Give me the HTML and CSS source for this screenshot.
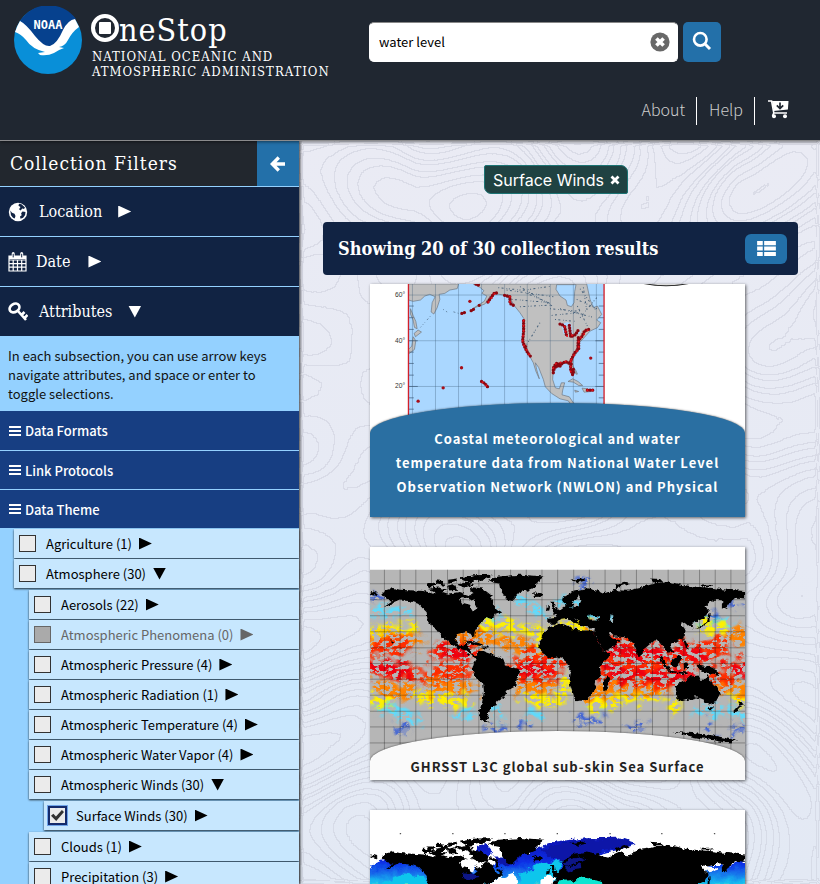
FILE: index.html
```html
<!DOCTYPE html>
<html lang="en">
<head>
<meta charset="utf-8">
<meta name="viewport" content="width=device-width, initial-scale=1">
<title>OneStop</title>
<link rel="stylesheet" href="styles.css">
</head>
<body>
<header class="site-header">
  <a class="brand" href="#">
    <svg class="brand-logo" viewBox="0 0 68 68" aria-hidden="true">
      <circle cx="34" cy="34" r="34" fill="#098fd8"/>
      <path d="M6 15A34 34 0 0 1 62 13C55 16 51 24 47 32Q42 42 37 42Q30 42 21 31Q13 20 6 15Z" fill="#06418e"/>
      <path d="M6 15Q12 18 21 30Q30 41 36 40Q43 38 49 24Q54 14 61 13L65 21Q58 26 54 34Q51 40 45 41L50 42Q44 44 40 47Q34 50 26 49L24 47L31 46Q18 43 12 34Q7 28 1 26Q3 20 6 15Z" fill="#fff"/>
      <text class="logo-text" x="34" y="23" text-anchor="middle">NOAA</text>
    </svg>
    <span class="brand-text">
      <span class="brand-name"><svg class="brand-o" viewBox="0 0 28 28" role="img" aria-label="O"><circle cx="14" cy="14" r="12" fill="none" stroke="#fff" stroke-width="4"/><rect x="8" y="8" width="12" height="12" rx="1" fill="#fff"/></svg>neStop</span>
      <span class="brand-org">NATIONAL OCEANIC AND<br>ATMOSPHERIC ADMINISTRATION</span>
    </span>
  </a>
  <div class="header-tools">
    <form class="search" role="search">
      <div class="search-box">
        <input class="search-input" type="text" value="water level" aria-label="Search text">
        <button class="search-clear" type="button" aria-label="Clear search">
          <svg viewBox="0 0 20 20"><circle cx="10" cy="10" r="9.6" fill="#686868"/><path d="M6.4 6.4l7.2 7.2M13.6 6.4l-7.2 7.2" stroke="#fff" stroke-width="3.6"/></svg>
        </button>
      </div>
      <button class="search-submit" type="submit" aria-label="Search">
        <svg viewBox="0 0 20 20" fill="none" stroke="#fff"><circle cx="8.3" cy="8.3" r="6.3" stroke-width="2.6"/><path d="M12.8 12.8l5.2 5.2" stroke-width="3"/></svg>
      </button>
    </form>
    <nav class="site-nav" aria-label="Site">
      <a href="#">About</a>
      <a href="#">Help</a>
      <a href="#" aria-label="Cart">
        <svg class="cart" viewBox="0 0 22 20"><path d="M1 2h3.600l2.200 12H20M6.500 14.500l-1 2.500" fill="none" stroke="#fff" stroke-width="1.600"/><path d="M5 2h16.500l-.6 8.600L6.700 12z" fill="#fff"/><circle cx="7" cy="17.300" r="2" fill="#fff"/><circle cx="18" cy="17.300" r="2" fill="#fff"/><path d="M13 3.500v5.500M9.800 6.300L13 9.500l3.200-3.200" fill="none" stroke="#202731" stroke-width="1.700"/></svg>
      </a>
    </nav>
  </div>
</header>

<div class="workspace">
  <aside class="filters">
    <div class="filters-head">
      <h1>Collection Filters</h1>
      <button class="collapse" type="button" aria-label="Hide filters">
        <svg viewBox="0 0 16 16" fill="none" stroke="#fff" stroke-width="3.400"><path d="M15 8H3M8.800 1.500L2.300 8l6.500 6.500"/></svg>
      </button>
    </div>
    <button class="section" type="button">
      <svg class="section-icon" viewBox="0 0 20 20"><circle cx="10" cy="10" r="9.200" fill="#fff"/><path d="M11 1.800l2.500.4 3.500 3.300-1 1.500-1.800-.6-1.500 2.100-1.700-1.200 1.500-2.300-2-1.200zM14.500 9.500l3 .5-.4 3-2 2.800-2.600 1-.5-2.300 1.700-1.200-.6-2zM2.300 8.500l1.700 2.300 2.500 1 1 2.200-.8 2.500-1.700-.7-2-2.600z" fill="#112343"/></svg>
      <span>Location</span><i class="tri"></i>
    </button>
    <button class="section section-date" type="button">
      <svg class="section-icon" viewBox="0 0 20 20"><path d="M1 4h17v15H1zM1 8h17M1 11.600h17M1 15.200h17M5.200 8v11M9.500 8v11M13.700 8v11" fill="none" stroke="#fff" stroke-width="1.200"/><path d="M1 4h17v3H1z" fill="#fff"/><path d="M5.200 1.500v4M13.700 1.500v4" stroke="#fff" stroke-width="3" stroke-linecap="round"/><path d="M5.200 1.800v3.600M13.700 1.800v3.600" stroke="#112343" stroke-width="1"/></svg>
      <span>Date</span><i class="tri"></i>
    </button>
    <button class="section" type="button" aria-expanded="true">
      <svg class="section-icon" viewBox="0 0 20 20" fill="none" stroke="#fff"><ellipse cx="6.500" cy="6" rx="5.200" ry="4" transform="rotate(-32 6.500 6)" stroke-width="2.600"/><path d="M9.500 8.500l8.500 9.500M13.500 13l3-3M16.500 16l3-3" stroke-width="2.600"/></svg>
      <span>Attributes</span><i class="tri tri-open"></i>
    </button>
    <p class="hint">In each subsection, you can use arrow keys navigate attributes, and space or enter to toggle selections.</p>
    <button class="facet" type="button"><i class="bars"></i>Data Formats</button>
    <button class="facet" type="button"><i class="bars"></i>Link Protocols</button>
    <button class="facet" type="button" aria-expanded="true"><i class="bars"></i>Data Theme</button>
    <ul class="tree">
      <li><div class="row"><label><input type="checkbox">Agriculture (1)</label><i class="tri"></i></div></li>
      <li><div class="row"><label><input type="checkbox">Atmosphere (30)</label><i class="tri tri-open"></i></div>
        <ul>
          <li><div class="row"><label><input type="checkbox">Aerosols (22)</label><i class="tri"></i></div></li>
          <li><div class="row row-off"><label><input type="checkbox" disabled>Atmospheric Phenomena (0)</label><i class="tri"></i></div></li>
          <li><div class="row"><label><input type="checkbox">Atmospheric Pressure (4)</label><i class="tri"></i></div></li>
          <li><div class="row"><label><input type="checkbox">Atmospheric Radiation (1)</label><i class="tri"></i></div></li>
          <li><div class="row"><label><input type="checkbox">Atmospheric Temperature (4)</label><i class="tri"></i></div></li>
          <li><div class="row"><label><input type="checkbox">Atmospheric Water Vapor (4)</label><i class="tri"></i></div></li>
          <li><div class="row"><label><input type="checkbox">Atmospheric Winds (30)</label><i class="tri tri-open"></i></div>
            <ul>
              <li><div class="row"><label><input type="checkbox" checked>Surface Winds (30)</label><i class="tri"></i></div></li>
            </ul>
          </li>
          <li><div class="row"><label><input type="checkbox">Clouds (1)</label><i class="tri"></i></div></li>
          <li><div class="row"><label><input type="checkbox">Precipitation (3)</label><i class="tri"></i></div></li>
        </ul>
      </li>
    </ul>
  </aside>

  <main class="results">
    <svg class="contours" aria-hidden="true">
      <filter id="topo" x="0" y="0" width="100%" height="100%" color-interpolation-filters="sRGB">
        <feTurbulence type="fractalNoise" baseFrequency=".009" numOctaves="1" seed="8"/>
        <feColorMatrix values="0 0 0 0 0  0 0 0 0 0  0 0 0 0 0  1 0 0 0 0"/>
        <feGaussianBlur stdDeviation="2"/>
        <feComponentTransfer result="steps"><feFuncA type="discrete" tableValues="0 1 0 1 0 1 0 1 0 1 0 1 0 1 0 1 0 1 0 1 0 1 0 1 0 1 0 1 0 1 0 1"/></feComponentTransfer>
        <feMorphology operator="dilate" radius="1" result="wide"/>
        <feComposite in="wide" in2="steps" operator="out"/>
        <feGaussianBlur stdDeviation=".7"/>
        <feColorMatrix values="0 0 0 0 .78  0 0 0 0 .79  0 0 0 0 .84  0 0 0 .45 0"/>
      </filter>
      <rect width="100%" height="100%" filter="url(#topo)"/>
    </svg>
    <div class="chips">
      <button class="chip" type="button">Surface Winds
        <svg viewBox="0 0 10 10"><path d="M1.500 1.500l7 7M8.500 1.500l-7 7" stroke="#fff" stroke-width="2.800"/></svg>
      </button>
    </div>
    <div class="results-bar">
      <h2>Showing 20 of 30 collection results</h2>
      <button class="view-toggle" type="button" aria-label="Show as list">
        <svg viewBox="0 0 20 16" fill="#fff"><path d="M0 0h6v4.400H0zM7.500 0H20v4.400H7.500zM0 5.800h6v4.400H0zM7.500 5.800H20v4.400H7.500zM0 11.600h6V16H0zM7.500 11.600H20V16H7.500z"/></svg>
      </button>
    </div>
    <div class="cards">
      <a class="card card-active" href="#">
        <svg class="card-art" viewBox="30 14 1125 698" preserveAspectRatio="xMidYMin slice" aria-hidden="true">
          <clipPath id="chart"><path d="M146 14h586v460H146z"/></clipPath>
          <path fill="#fff" d="M30 14h1125v698H30z"/>
          <path fill="#aad7ff" d="M146 14h586v460H146z"/>
          <g clip-path="url(#chart)">
            <g fill="#c0c0c0" stroke="#6d7680" stroke-width="2">
              <path d="M146 14H296L292 28 270 32 255 42 238 45 240 60 232 85 222 104 214 98 217 70 226 52 210 45 195 50 182 62 160 66 146 62z"/>
              <path d="M152 88l8 20 8 18 4 22-8-4-4-22-8-18zM163 162l12-10 10 6-18 14zM160 172l8 12-4 26-10 8-8 6v-14l10-10z"/>
              <path d="M340 14L360 24 372 34 366 42 381 50 373 66 341 86 375 74 391 50 403 42 434 48 452 60 464 80 480 100 492 118 488 130 488 186 496 210 510 232 520 250 528 276 538 298 530 270 526 250 536 264 550 300 556 322 575 342 600 358 625 364 635 380 650 385 628 352 606 346 608 332 614 310 604 310 598 328 586 325 578 300 580 268 590 256 604 248 626 254 632 268 638 288 644 280 638 252 640 235 656 212 658 190 672 175 690 155 712 145 722 130 710 122 725 105 712 80 700 85 690 60 680 14z"/>
              <path d="M624 306l14-8 16 8 14 12-12 0-16-10zM666 326l16 2 12 8-22 2zM644 332l12 4-10 2zM640 262l8 12 4 10-4 0z"/>
            </g>
            <path d="M590 16h58l-4 20-2 34-8 12-12-4-4-16-18-12-12-20z" fill="#aad7ff" stroke="#6d7680" stroke-width="2"/>
            <g fill="none" stroke="#48627b" stroke-width="3" stroke-dasharray="3 7 6 9 2 5">
              <path d="M415 25l75 8 80-12M455 60l120 10M480 82l95-5M440 32l140 20M570 88l90 8M575 108l80-8M540 130l-40 65M650 60l65 30M480 22l100 60M660 115l50-60M600 88l100 26M660 28l46 62M585 120l60 6M670 24l10 70M500 42l70 30M652 80l30 60"/>
              <path d="M250 90l12 8M296 102l-20-6M212 110l-30 34" stroke-width="2"/>
            </g>
            <path d="M604 134l18-6 12 6 4 30-8-2-6-24-8 6 0 22-6-4zM636 168l18-8 10-10-4 12-22 10z" fill="#aad7ff"/>
            <g stroke="#395875" stroke-opacity=".65" stroke-width="1.500" fill="none"><path d="M158 14v400M227 14v400M296 14v400M365 14v400M434 14v400M502 14v400M571 14v400M640 14v400M709 14v400M146 47h586M146 184h586M146 321h586"/><path stroke-opacity="1" stroke-width="2" d="M146 80h16M146 115h16M146 150h16M146 218h16M146 252h16M146 287h16M146 355h16M146 389h16M716 80h16M716 115h16M716 150h16M716 218h16M716 252h16M716 287h16M716 355h16M146 184h28M146 321h28M706 184h26M706 321h26"/></g>
          </g>
          <g fill="none" stroke="#8b0710" stroke-width="10" stroke-linecap="round" stroke-linejoin="round" stroke-dasharray="0 8">
            <path d="M384 68l20-28 12 2M434 48l16 4 0 20 14 8M491 124v32l-3 28 4 14 10 20 12 16M580 280v-14l8-14 16 2 12-8 18 8M582 270l6-10 20 0M632 246v24l6 16-4 4M634 240l10-20 12-12 0-28 8-6 10-20 12-4M614 142l6 28M628 138l4 34 14-6 10-16M600 134l12 4M365 306l10 6 8 10M682 332h22M358 78l6 2M306 102l10-3M334 94l10-6M348 14l14 6M640 270v12M492 195l6 8M655 175l-2 38"/>
          </g>
          <g fill="none" stroke="#e5111b" stroke-width="6" stroke-linecap="round" stroke-dasharray="0 15"><path d="M386 68l20-28M450 52v20M491 124v32l-3 28 4 14 20 34M580 266l8-14 30-6M632 246v44M634 240l22-32v-28l30-30M614 142l6 28 26-4M368 308l15 14M682 332h20"/></g>
          <g fill="#a70e18"><circle cx="330" cy="66" r="5"/><circle cx="305" cy="265" r="5"/><circle cx="250" cy="325" r="5"/><circle cx="175" cy="365" r="5"/><circle cx="692" cy="236" r="5"/></g>
          <path d="M146 14v450M732 14v450" stroke="#d3202b" stroke-width="4"/>
          <g class="axis" text-anchor="end"><text x="136" y="53">60°</text><text x="136" y="190">40°</text><text x="136" y="327">20°</text></g>
          <path d="M848 12q70 14 140 0" fill="#ddd" stroke="#222" stroke-width="3"/>
        </svg>
        <h3 class="card-title">Coastal meteorological and water temperature data from National Water Level Observation Network (NWLON) and Physical</h3>
      </a>
      <a class="card" href="#">
        <svg class="card-art" viewBox="30 20 1125 698" preserveAspectRatio="xMidYMin slice" aria-hidden="true">
          <defs>
            <filter id="speckle" filterUnits="userSpaceOnUse" x="30" y="20" width="1125" height="700" color-interpolation-filters="sRGB">
              <feGaussianBlur in="SourceGraphic" stdDeviation="6" result="soft"/>
              <feTurbulence type="fractalNoise" baseFrequency=".04" numOctaves="1" seed="12" result="warp"/>
              <feDisplacementMap in="soft" in2="warp" scale="70" xChannelSelector="R" yChannelSelector="G" result="swirl"/>
              <feTurbulence type="fractalNoise" baseFrequency=".05 .08" numOctaves="5" seed="4"/>
              <feColorMatrix values="0 0 0 0 0  0 0 0 0 0  0 0 0 0 0  12 0 0 0 -5"/>
              <feComposite in="swirl" operator="in" result="a"/>
              <feComposite in="swirl" in2="a" operator="in"/>
              <feMerge><feMergeNode in="a"/></feMerge>
            </filter>
            <filter id="rough" filterUnits="userSpaceOnUse" x="0" y="20" width="1200" height="700">
              <feTurbulence type="fractalNoise" baseFrequency=".07" numOctaves="3" seed="2"/>
              <feDisplacementMap in="SourceGraphic" scale="14" xChannelSelector="R" yChannelSelector="G"/>
            </filter>
            <g id="land" filter="url(#rough)">
              <path fill-rule="evenodd" d="M68 162L75 150 100 143 120 148 190 152 220 160 235 150 265 160 300 155 330 165 350 152 375 160 398 180 410 205 427 216 405 224 395 236 375 230 362 248 353 258 345 272 343 292 335 280 320 275 292 280 287 300 297 315 310 318 316 308 328 305 324 322 332 328 334 342 350 344 345 350 328 342 318 330 296 324 270 310 250 292 232 268 217 257 203 237 200 215 187 202 175 190 150 182 120 180 98 190 72 197 98 180 80 178ZM300 176L318 172 338 180 348 176 342 192 350 206 340 212 330 196 308 190Z"/>
              <path d="M200 128h18l10 8-20 6zM228 120l24 2 4 14-26-4zM205 145l30-4 30 8-35 8zM262 118l30-4-8 12-22 4zM290 132l34-6 22 6-30 10zM300 114l40-9 60-2-25 14-50 10zM330 140l38 4 28 22-8 10-30-16-26-4zM264 138l22-4 6 14-24 2z"/>
              <path d="M385 118L415 108 480 103 553 108 530 125 528 140 505 150 480 155 455 182 440 175 425 155 420 130 400 126Z"/>
              <path d="M516 160l14-4 18 4-6 9-22 1zM30 152l20 4 8 8-28-4zM570 184l12 0 2 16 12 16-20 4 4-14zM560 200l10-4-2 14-10 2zM628 118l40-4 12 6-24 6zM732 112h20M765 136l30-12 15 4-34 12-12 8zM870 114l30 2 8 8-28 2zM1020 132h40v5h-36z"/>
              <path fill-rule="evenodd" d="M608 184L612 168 645 150 680 143 710 150 730 160 760 149 800 151 840 142 880 130 920 122 960 132 1000 138 1050 142 1100 148 1155 152V174L1130 172 1112 180 1100 200 1085 208 1085 190 1095 180 1060 178 1036 198 1046 212 1037 230 1015 241 998 248 998 264 988 257 976 247 962 250 976 270 973 290 950 302 935 305 930 318 940 335 925 340 915 325 905 315 893 300 880 300 865 315 845 330 845 346 835 350 825 318 818 305 795 290 765 288 748 272 744 276 755 290 778 300 770 312 735 334 728 330 702 280 705 262 675 260 660 254 655 240 645 228 658 250 640 247 625 232 600 236 585 250 565 250 565 232 590 230 580 215 602 208 615 198 616 190ZM655 165L635 185 640 192 630 202 655 198 664 180ZM680 228L690 222 720 230 715 240 685 240ZM748 222L760 224 758 250 748 240Z"/>
              <path d="M565 262L600 250 625 256 640 268 670 270 700 270 706 290 730 334 752 335 745 352 720 375 722 402 708 425 702 450 680 476 650 482 640 460 628 425 632 395 620 365 600 350 570 354 545 335 538 312 546 288Z"/>
              <path d="M742 408l8 4-8 36-12 4-2-22z"/>
              <path d="M342 348L355 335 372 332 400 342 430 355 435 375 475 385 484 398 470 415 466 438 442 450 430 470 412 482 410 494 396 498 392 512 382 515 386 526 380 536 388 546 362 538 357 515 365 490 372 455 370 430 350 415 337 388 342 370 348 360Z"/>
              <path d="M946 440L952 430 975 422 990 408 1015 405 1022 418 1036 418 1042 400 1052 425 1072 440 1079 460 1066 485 1045 492 1030 478 1010 470 985 477 965 482 952 475Z"/>
              <path d="M1045 500h16l-6 9h-8zM1134 482l14 4 6 8-16 6-4 12-16 4 12-14 8-8zM893 345l10 2 22 34 8 8-10 2-16-18zM935 360l18-14 14 4-6 16-14 12-12-4zM925 390l30 4 24 2v5l-50-6zM970 368l12-4 2 20-10 4zM1008 372l18 2 32 8 24 22-26-4-32-6-8-10zM968 290l10 14 8 24-10-6zM1040 248l4-24 4-4 0 24-18 14-26 6zM310 300l30 2 30 10-10 4-26-6zM364 318l22 0 0 6-18 0zM90 298l16 8-4 4zM940 574l60 3 60 8 70 14-20 10-50-10-60-10z"/>
            </g>
          </defs>
          <path fill="#fff" d="M30 20h1125v70H30z"/><path fill="#b6b6b6" d="M30 88h1125v632H30z"/>
          <g filter="url(#speckle)" fill="none" stroke-linecap="round">
            <path stroke="#5bdcff" stroke-width="26" d="M30 215h120M480 175l70 50M600 190h70M675 232h90M1020 246h90M60 500l110 34M290 522l50-10M400 505l20 20M510 520h30M690 490l30 14M1010 510h60M1110 510l45 20M370 245l40-15"/>
            <path stroke="#1746de" stroke-width="14" d="M40 165l30 10M110 565h40M385 560h50M650 540h80M660 128h30M1050 545v30M1110 195l30-5M810 560h50M1050 228h20M1120 565h30M480 545h20"/>
            <path stroke="#fff000" stroke-width="34" d="M35 275l125-10M350 260l80-5 120 20M560 280l-20 50M600 250l100 15M1030 262h60M40 480h60M170 465l150 20M600 470l30-60M700 495l60-10M780 470h110M930 490h20M1125 470l30 10M500 470l80 15"/>
            <path stroke="#ff8200" stroke-width="42" d="M50 300h120M290 290l140 10 70 20 40 20M480 440h80M760 440h150M215 440h120M1080 430l70 20M1110 290l45-5M690 460l50-10M330 270l30 10M60 440l90 20"/>
            <path stroke="#ff2d00" stroke-width="50" d="M35 380l120 20M240 330l80 10M35 320h90M210 400l100-10M490 400l90 0M470 375l120-10M520 340l60 25M760 345l70 0M730 370l170 0M735 400l180 15M870 330l60 30M960 320l80 20M950 350l100 0M980 400l-60 20M1040 330l50-20M1120 380l35 0M760 310l60 0M310 320l20 10M1070 405l30 10"/>
            <path stroke="#ee0010" stroke-width="36" d="M50 380l90 15M250 335h70M490 390h80M750 320l80 30M740 380l70 30M860 330l60 20M960 330l80 20M940 410l50-10M705 275l20 45M830 400l70 10M1120 385l35 0"/>
          </g>
          <path d="M74 88v620M121 88v620M168 88v620M215 88v620M263 88v620M310 88v620M357 88v620M404 88v620M452 88v620M499 88v620M546 88v620M593 88v620M641 88v620M688 88v620M735 88v620M782 88v620M829 88v620M877 88v620M924 88v620M971 88v620M1018 88v620M1065 88v620M1112 88v620M30 130h1125M30 178h1125M30 226h1125M30 274h1125M30 322h1125M30 369h1125M30 416h1125M30 464h1125M30 512h1125M30 559h1125M30 607h1125" fill="none" stroke="#111" stroke-opacity=".38" stroke-width="2.500"/>
          <use href="#land"/>
        </svg>
        <h3 class="card-title">GHRSST L3C global sub-skin Sea Surface</h3>
      </a>
      <a class="card" href="#" aria-label="Global sea surface collection">
        <svg class="card-art" viewBox="30 75 1125 698" preserveAspectRatio="xMidYMin slice" aria-hidden="true">
          <defs>
            <linearGradient id="sea" gradientUnits="userSpaceOnUse" x1="0" y1="160" x2="0" y2="310"><stop offset="0" stop-color="#0712b0"/><stop offset=".5" stop-color="#0f2fe6"/><stop offset=".9" stop-color="#18bdf0"/><stop offset="1" stop-color="#6dfab0"/></linearGradient>
            <filter id="frost" filterUnits="userSpaceOnUse" x="0" y="75" width="1200" height="700"><feTurbulence type="fractalNoise" baseFrequency=".04" numOctaves="4" seed="9"/><feDisplacementMap in="SourceGraphic" scale="26" xChannelSelector="R" yChannelSelector="G"/></filter>
          </defs>
          <path fill="#fff" d="M30 75h1125v698H30z"/>
          <g filter="url(#frost)">
            <path fill="url(#sea)" d="M20 250L60 225 150 215 200 235 215 330H20zM350 180L375 175 410 215 470 215 540 185 580 170 680 160 770 158 830 178 730 205 780 330H380L430 270 370 300 330 280zM1010 300L1040 240 1100 240 1165 225V330H1010z"/>
            <path fill="#10c6ec" d="M60 300l70-35 60 10 20 30zM480 265l70-30 60-10-20 60-100 20z"/>
            <path fill="#0717a8" d="M540 190l120-25 120 0 40 12-120 28-60 20-60 0zM400 215l90 0-60 30z"/>
          </g>
          <use href="#land" transform="translate(0 56)"/>
          <g filter="url(#frost)">
            <path fill="#fff" d="M302 232l30-14 30 14 18 0-30 16-18 6zM35 216l32 14-37 18zM390 200l20 14-8 26-22-8zM410 285l55-20 5 40h-70zM545 280l35-8-6 30h-30z"/>
            <path d="M196 196l120-6 90 36 20 40-60 30H210l-6-50z" fill="none" stroke="#000" stroke-width="9" stroke-dasharray="22 12 40 8"/>
            <path fill="#000" d="M585 270L650 215 720 210 900 190 1030 210 1155 210 1030 245 1010 300H740l-90-14z"/>
            <path fill="#0a1286" d="M600 230l60-14 20 8-60 20zM620 245l40-8 5 12-50 8zM305 265l40 0 14 14-40 6z"/>
            <path fill="#fff" d="M715 210l40-10 20 4-30 14zM790 196l40-16 20 0-10 14-40 14zM1020 240l50 8 0 6-30 8z"/>
            <path fill="#0fe5d1" d="M590 290l80-10 60 10 10 20H590z"/>
          </g>
          <path fill="#555" d="M120 144h4v4h-4zM277 144h4v4h-4zM433 144h4v4h-4zM590 144h4v4h-4zM748 144h4v4h-4zM903 144h4v4h-4zM1061 144h4v4h-4z"/>
        </svg>
      </a>
    </div>
  </main>
</div>
</body>
</html>
```
FILE: styles.css
```css
* { box-sizing: border-box; }

:root {
  --ink: #202731;
  --navy: #112343;
  --blue: #2370a9;
  --sky: #94d1ff;
  --sans: "Noto Sans CJK SC", "Noto Sans", sans-serif;
  --serif: "DejaVu Serif Condensed", "DejaVu Serif", serif;
}

body {
  margin: 0;
  height: 100vh;
  display: flex;
  flex-direction: column;
  overflow: hidden;
  font-family: var(--sans);
  font-size: 13px;
  color: #111;
}

button { border: 0; font: inherit; color: inherit; cursor: pointer; }
a { color: inherit; text-decoration: none; }
h1, h2, h3, p, ul { margin: 0; padding: 0; }
svg { display: block; }

.site-header {
  position: relative;
  z-index: 2;
  flex: none;
  display: flex;
  min-height: 141px;
  background: var(--ink);
  color: #fff;
  border-bottom: 1px solid #8b8b8d;
  box-shadow: 0 1px 3px rgba(0, 0, 0, .5);
}

.brand {
  flex: none;
  display: flex;
  gap: 9px;
  width: 369px;
  padding: 6px 0 0 14px;
}
.brand-logo { width: 68px; height: 68px; }
.logo-text { font: bold 12px "DejaVu Sans Mono", monospace; fill: #fff; }
.brand-text { display: block; padding-top: 8px; font-family: var(--serif); }
.brand-name { display: flex; font-size: 32px; line-height: 32px; letter-spacing: 1px; }
.brand-o { width: 28px; height: 28px; }
.brand-org { display: block; padding: 3px 0 0 1px; font-size: 13px; line-height: 15px; letter-spacing: 1px; white-space: nowrap; }

.header-tools { flex: 1; padding-top: 22px; }
.search { display: flex; gap: 5px; max-width: 352px; }
.search-box { position: relative; flex: 1; }
.search-input {
  width: 100%;
  height: 40px;
  padding: 0 40px 2px 9px;
  border: 1px solid #999;
  border-color: #888 #fff #fff;
  border-radius: 5px;
  font: inherit;
  color: #000;
}
.search-clear {
  position: absolute;
  top: 10px;
  right: 8px;
  width: 20px;
  height: 20px;
  padding: 0;
  background: none;
}
.search-submit { display: grid; place-items: center; width: 38px; height: 40px; padding: 0 0 2px; border-radius: 5px; background: var(--blue); }
.search-submit svg { width: 20px; height: 20px; }

.site-nav { display: flex; justify-content: flex-end; padding: 35px 20px 0 0; }
.site-nav a { display: flex; align-items: center; height: 28px; padding: 0 11px 4px 12px; font-size: 16px; font-weight: 300; color: #ccc; }
.site-nav a + a { border-left: 1px solid #fff; }
.cart { width: 22px; height: 20px; }

.workspace { flex: 1; display: flex; min-height: 0; }

.filters {
  position: relative;
  z-index: 1;
  flex: none;
  width: 299px;
  background: var(--sky);
  box-shadow: 1px 0 3px rgba(0, 0, 0, .8);
}
.filters-head { display: flex; height: 45px; background: #22272e; color: #fff; }
.filters-head h1 { flex: 1; padding-left: 10px; font: 19px/45px var(--serif); letter-spacing: 1px; }
.collapse { display: grid; place-items: center; width: 42px; background: var(--blue); }
.collapse svg { width: 16px; height: 16px; }

.section {
  display: flex;
  align-items: center;
  width: 100%;
  height: 50px;
  padding: 0 8px;
  border-top: 1px solid var(--sky);
  background: var(--navy);
  color: #fff;
  font: 16px/20px var(--serif);
}
.section span { padding: 0 16px 0 11px; }
.section-date span { padding: 0 18px 0 8px; }
.section-icon { width: 20px; height: 20px; }

.tri { width: 13px; height: 12px; background: currentColor; clip-path: polygon(0 0, 100% 50%, 0 100%); }
.tri-open { clip-path: polygon(0 0, 100% 0, 50% 100%); }

.hint { padding: 10px 8px 8px; line-height: 19px; }

.facet {
  display: flex;
  align-items: center;
  gap: 4px;
  width: 100%;
  height: 39px;
  padding: 0 9px;
  background: #173e82;
  color: #fff;
  font-weight: 500;
}
.facet + .facet { border-top: 1px solid var(--sky); }
.bars { width: 12px; height: 10px; border: solid #fff; border-width: 2px 0; background: linear-gradient(#fff, #fff) center / 100% 2px no-repeat; }

.tree { padding: 1px 0 0 14px; list-style: none; }
.tree ul { padding: 1px 0 1px 15px; list-style: none; }
.row {
  display: flex;
  align-items: center;
  gap: 7px;
  height: 29px;
  margin-bottom: 1px;
  padding-left: 5px;
  background: #c7e7fe;
  color: #000;
  box-shadow: 0 1px 2px rgba(0, 0, 0, .8);
}
.row label { display: flex; align-items: center; gap: 10px; line-height: 20px; }
.row input {
  appearance: none;
  display: grid;
  place-items: center;
  width: 17px;
  height: 17px;
  margin: 0;
  border: 1px solid #333;
  background: #ebebeb;
}
.row input:checked { outline: 2px solid #142a6b; outline-offset: -1px; box-shadow: 0 0 0 2px #6fa3e8; }
.row input:checked::after { content: ""; width: 13px; height: 11px; background: #333; clip-path: polygon(0 52%, 18% 34%, 38% 58%, 84% 0, 100% 18%, 40% 100%); }
.row-off { color: #666; }
.row-off input { border-color: #666; background: #aaa; }

.results { position: relative; flex: 1; min-width: 0; padding: 24px 22px 0 24px; overflow: hidden; background: linear-gradient(#eaebf4, #e3e9f4); }
.contours { position: absolute; inset: 0; width: 100%; height: 100%; }

.chips { position: relative; display: flex; justify-content: center; padding-right: 9px; }
.chip {
  display: flex;
  align-items: center;
  gap: 6px;
  height: 29px;
  padding: 0 7px 0 8px;
  border: 1px solid #1c7474;
  border-radius: 2px 7px 2px 7px;
  background: #1f4242;
  color: #fff;
  font: 16px/20px Inter, sans-serif;
}
.chip svg { width: 10px; height: 10px; }

.results-bar {
  position: relative;
  display: flex;
  align-items: center;
  justify-content: space-between;
  height: 53px;
  margin-top: 28px;
  padding: 0 11px 0 15px;
  border-radius: 4px;
  background: var(--navy);
  color: #fff;
}
.results-bar h2 { font: bold 18px/24px var(--serif); }
.view-toggle { display: grid; place-items: center; width: 42px; height: 30px; border-radius: 6px; background: var(--blue); }
.view-toggle svg { width: 19px; height: 15px; }

.cards { position: relative; display: grid; grid-template-columns: minmax(0, 375px); justify-content: center; gap: 30px; padding: 9px 6px 0 0; }
.card { position: relative; display: block; height: 233px; overflow: hidden; background: #fff; box-shadow: 1px 1px 3px rgba(0, 0, 0, .6); }
.card-art { width: 100%; height: 100%; }
.axis { font: 20px "Liberation Sans", sans-serif; fill: #333; }
.card-title {
  position: absolute;
  inset: auto 0 0;
  padding: 24px 24px 1px;
  border-radius: 50% 50% 0 0 / 30px 30px 0 0;
  background: #fafafa;
  box-shadow: 0 0 2px rgba(0, 0, 0, .7);
  color: #222;
  font-size: 13px;
  font-weight: 700;
  line-height: 24px;
  letter-spacing: 1px;
  text-align: center;
}
.card-active .card-title { padding-bottom: 18px; background: #2a6fa2; color: #fff; }
```
